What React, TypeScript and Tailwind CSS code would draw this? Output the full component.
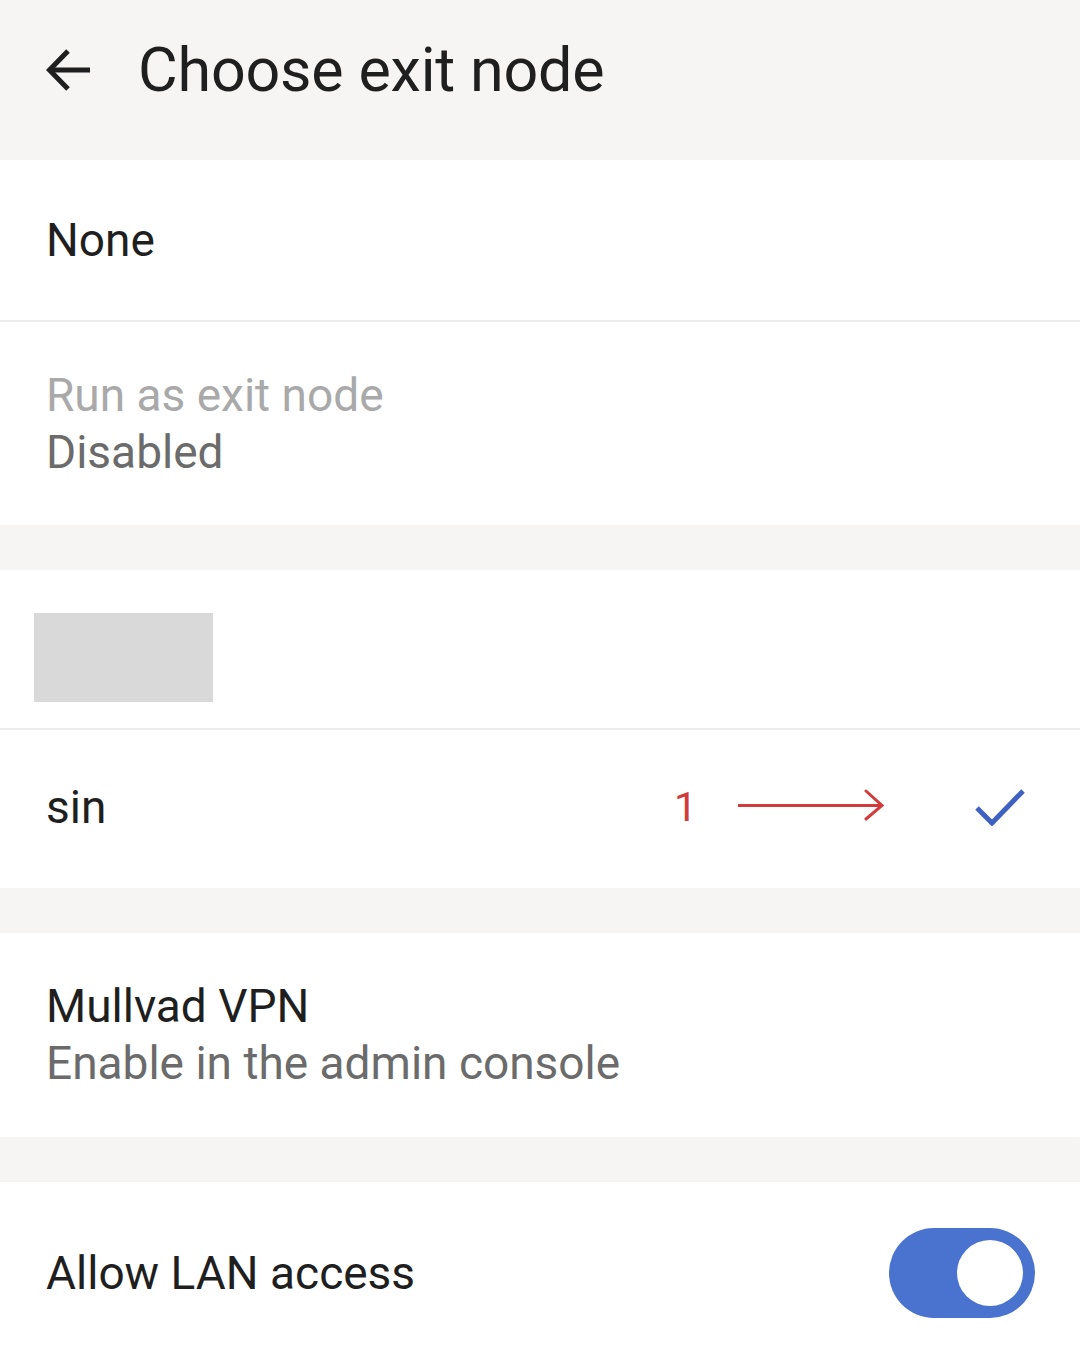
import { useState } from 'react';

function BackArrow() {
  return (
    <svg width="46" height="46" viewBox="0 0 46 46" fill="none" className="shrink-0">
      <path d="M44 23H4" stroke="#1f1f1f" strokeWidth="5" />
      <path d="M22 4L3.5 23L22 42" stroke="#1f1f1f" strokeWidth="5" strokeLinejoin="miter" />
    </svg>
  );
}

function Divider() {
  return <div className="h-[2px] bg-[#ececec]" />;
}

function Gap() {
  return <div className="h-[45px] bg-[#f6f5f4]" />;
}

export default function App() {
  const [lanAccess, setLanAccess] = useState(true);

  return (
    <div className="w-[1080px] h-[1355px] bg-white overflow-hidden font-['Roboto',sans-serif] text-[#1f1f1f]">
      {/* Header */}
      <div className="h-[160px] bg-[#f6f5f4] flex items-center pl-[46px] pb-[20px]">
        <BackArrow />
        <h1 className="ml-[46px] text-[61px] leading-none tracking-[-0.2px]">Choose exit node</h1>
      </div>

      {/* None */}
      <div className="h-[160px] flex items-center pl-[46px]">
        <span className="text-[46px] leading-none">None</span>
      </div>
      <Divider />

      {/* Run as exit node */}
      <div className="h-[203px] flex flex-col justify-center pl-[46px]">
        <span className="text-[46px] leading-[57px] text-[#a9a9a9]">Run as exit node</span>
        <span className="text-[46px] leading-[57px] text-[#6b6b6b]">Disabled</span>
      </div>
      <Gap />

      {/* Redacted group header */}
      <div className="h-[158px] flex items-center pl-[34px]">
        <div className="w-[179px] h-[89px] bg-[#d9d9d9] mt-[16px]" />
      </div>
      <Divider />

      {/* sin */}
      <div className="h-[158px] flex items-center pl-[46px] pr-[55px]">
        <span className="text-[46px] leading-none flex-1 pb-[4px]">sin</span>
        <span className="text-[41px] leading-none text-[#d13b3b] pb-[4px]">1</span>
        <svg width="148" height="32" viewBox="0 0 148 32" fill="none" className="ml-[40px] mb-[8px]">
          <path d="M1 16.5H145" stroke="#d13b3b" strokeWidth="3" />
          <path d="M129 2L145 16.5L129 30" stroke="#d13b3b" strokeWidth="3" strokeLinecap="round" />
        </svg>
        <svg width="50" height="38" viewBox="0 0 50 38" fill="none" className="ml-[90px] mb-[4px]">
          <path d="M2 20L17 35L48 3" stroke="#3f61c2" strokeWidth="5" />
        </svg>
      </div>
      <Gap />

      {/* Mullvad */}
      <div className="h-[204px] flex flex-col justify-center pl-[46px]">
        <span className="text-[46px] leading-[57px]">Mullvad VPN</span>
        <span className="text-[46px] leading-[57px] text-[#6b6b6b]">Enable in the admin console</span>
      </div>
      <Gap />

      {/* Allow LAN access */}
      <div className="h-[182px] flex items-start pt-[46px] pl-[46px] pr-[45px]">
        <span className="text-[46px] leading-[90px] flex-1">Allow LAN access</span>
        <button
          onClick={() => setLanAccess((v) => !v)}
          className={`w-[146px] h-[90px] rounded-full flex items-center px-[12px] ${
            lanAccess ? 'bg-[#4a72cf] justify-end' : 'bg-[#c9c9c9] justify-start'
          }`}
        >
          <span className="w-[66px] h-[66px] rounded-full bg-white" />
        </button>
      </div>
    </div>
  );
}
